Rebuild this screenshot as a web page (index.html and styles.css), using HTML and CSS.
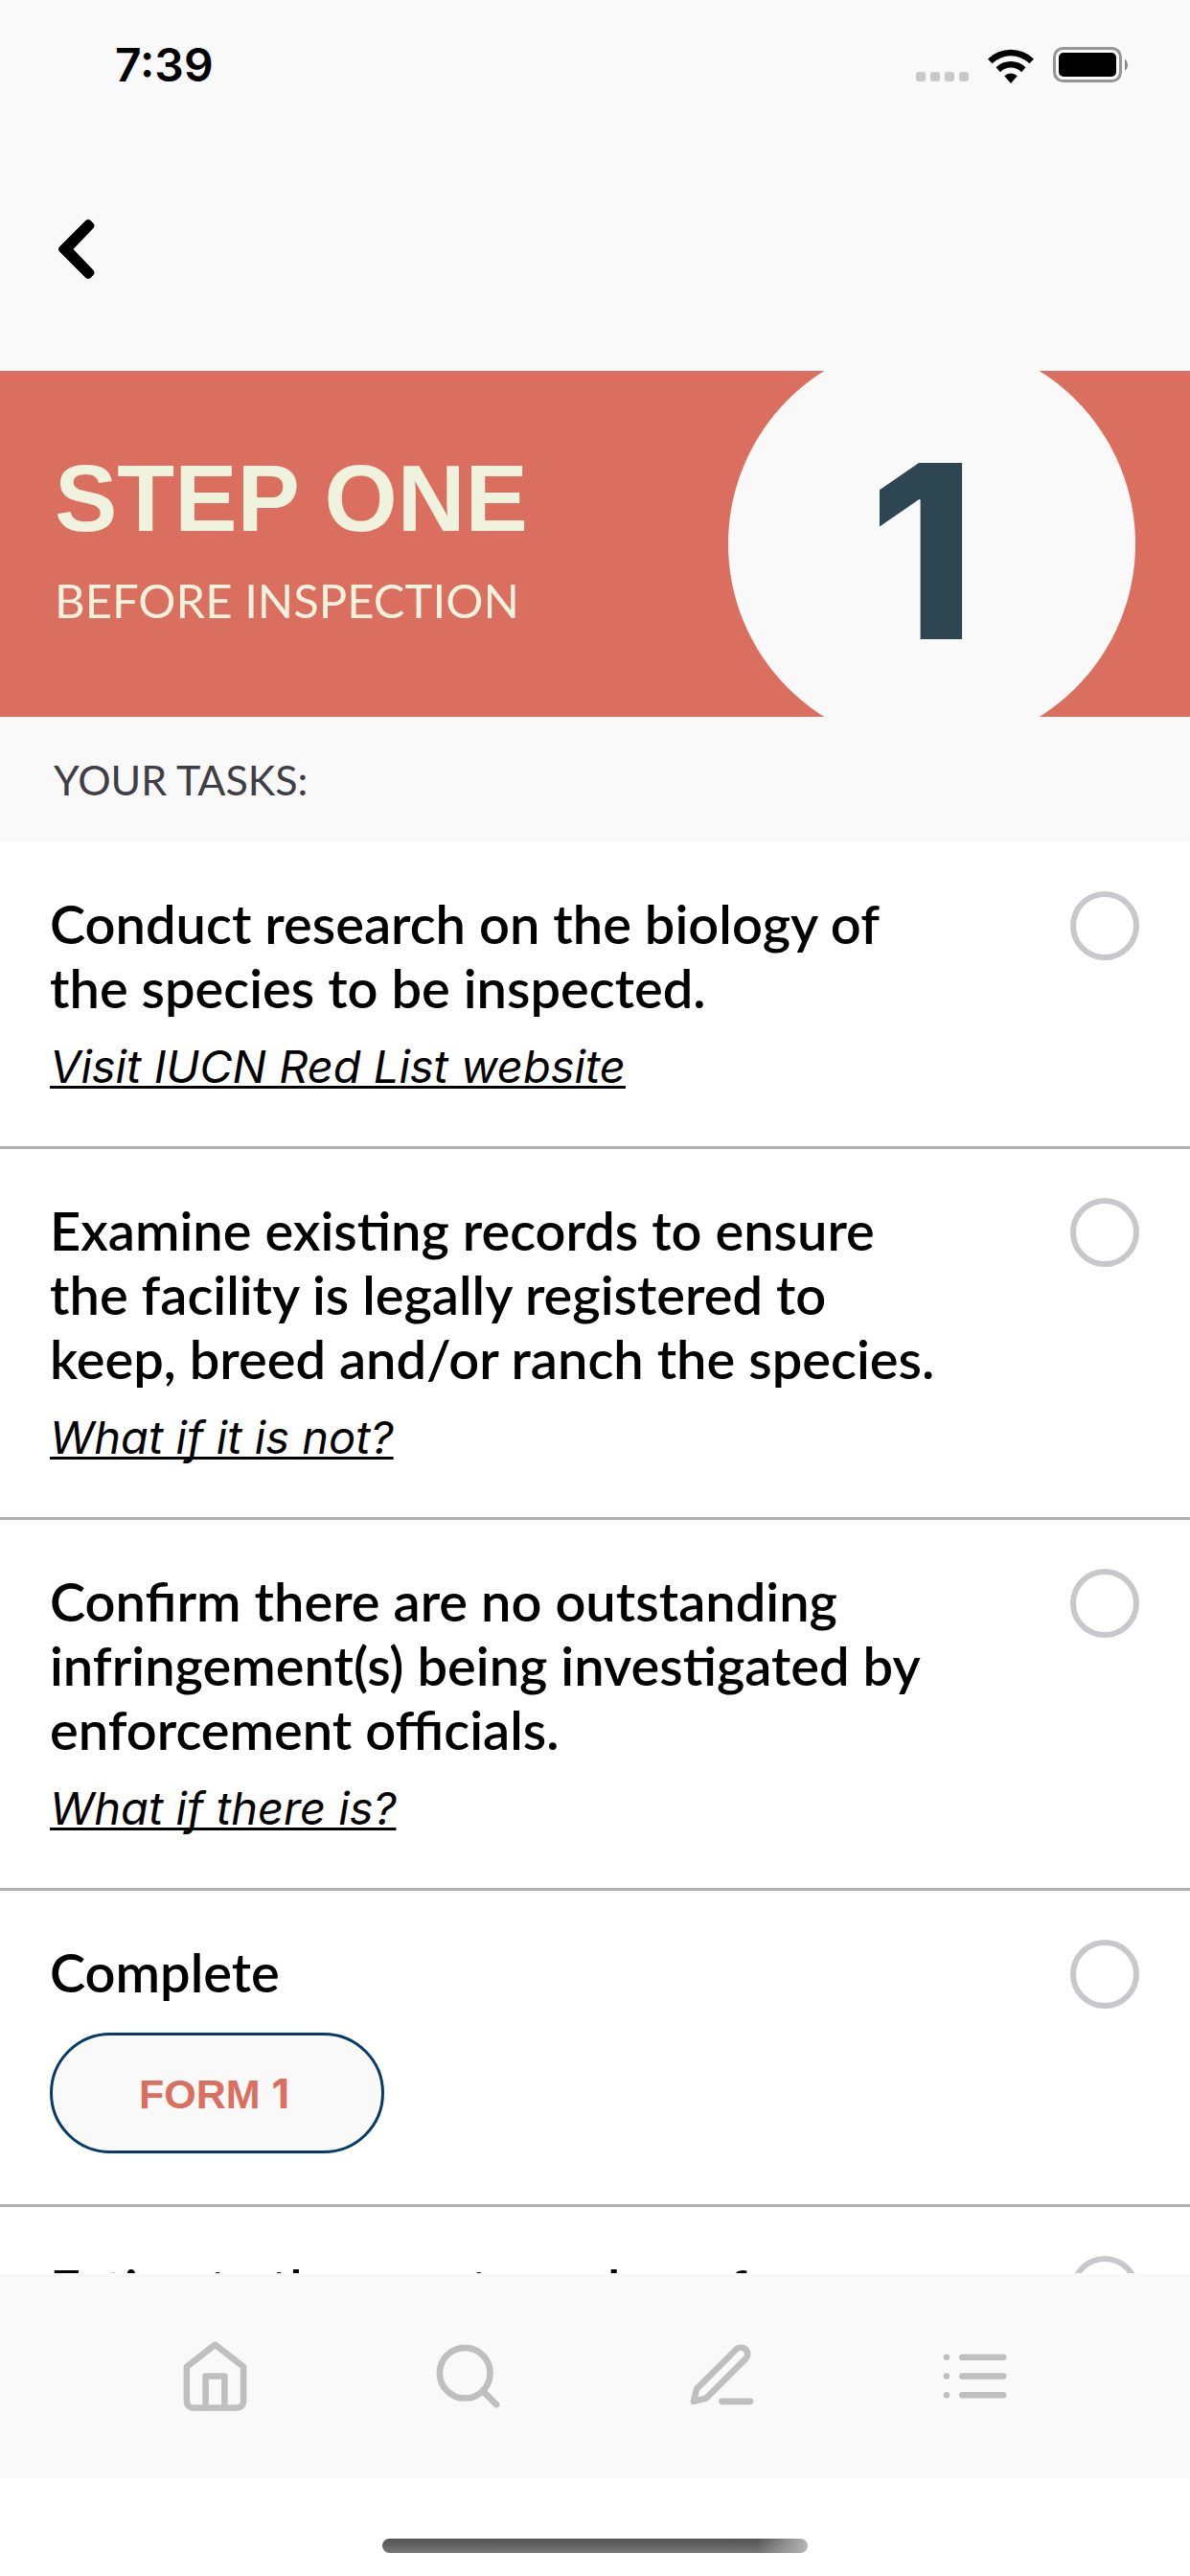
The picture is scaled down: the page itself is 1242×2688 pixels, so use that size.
FILE: index.html
```html
<!DOCTYPE html>
<html lang="en">
<head>
  <meta charset="UTF-8">
  <meta name="viewport" content="width=device-width, initial-scale=1">
  <title>Step One - Before Inspection</title>
  <link rel="stylesheet" href="styles.css">
</head>
<body>
  <div class="status-bar">
    <span class="time">7:39</span>
    <div class="status-icons">
      <div class="signal"><i></i><i></i><i></i><i></i></div>
      <svg class="wifi" viewBox="0 0 48 36">
        <path d="M0 10.500A34.500 34.500 0 0 1 48 10.500L43.500 15.200A28.200 28.200 0 0 0 4.500 15.200Z"/>
        <path d="M8.500 19.200A22.200 22.200 0 0 1 39.500 19.200L35 24.200A15.500 15.500 0 0 0 13 24.200Z"/>
        <path d="M17.200 28.300A9.800 9.800 0 0 1 30.800 28.300L24 36Z"/>
      </svg>
      <svg class="battery" viewBox="0 0 80 38">
        <rect x="1.500" y="1.500" width="69" height="34" rx="9" fill="none" stroke="#959595" stroke-width="3"/>
        <rect x="6" y="6" width="60" height="25" rx="5"/>
        <path d="M75 12.500a8 8 0 0 1 0 12.500z" fill="#858585"/>
      </svg>
    </div>
  </div>

  <header class="top-bar">
    <button class="back-btn" aria-label="Back">
      <svg viewBox="0 0 38 62">
        <path d="M28.500 1Q31 -1 33.500 1L36.500 4Q38.500 6.500 36.500 9L15.500 31L36.500 53Q38.500 55.500 36.500 58L33.500 61Q31 63 28.500 61L1 33.500Q-1 31 1 28.500Z"/>
      </svg>
    </button>
  </header>

  <section class="banner">
    <div class="banner-text">
      <h1>STEP ONE</h1>
      <p>BEFORE INSPECTION</p>
    </div>
    <div class="step-circle">1</div>
  </section>

  <h2 class="tasks-title">YOUR TASKS:</h2>

  <ul class="tasks">
    <li class="task">
      <div class="task-body">
        <label for="task1">Conduct research on the biology of the species to be inspected.</label>
        <a href="#iucn">Visit IUCN Red List website</a>
      </div>
      <input type="checkbox" id="task1">
    </li>
    <li class="task">
      <div class="task-body">
        <label for="task2">Examine existing records to ensure the facility is legally registered to keep, breed and/or ranch the species.</label>
        <a href="#not-registered">What if it is not?</a>
      </div>
      <input type="checkbox" id="task2">
    </li>
    <li class="task">
      <div class="task-body">
        <label for="task3">Confirm there are no outstanding infringement(s) being investigated by enforcement officials.</label>
        <a href="#infringements">What if there is?</a>
      </div>
      <input type="checkbox" id="task3">
    </li>
    <li class="task">
      <div class="task-body">
        <label for="task4">Complete</label>
        <button class="form-btn">FORM <span class="digit">1</span></button>
      </div>
      <input type="checkbox" id="task4">
    </li>
    <li class="task">
      <div class="task-body">
        <label for="task5">Estimate the exact number of</label>
      </div>
      <input type="checkbox" id="task5">
    </li>
  </ul>

  <nav class="tab-bar">
    <a href="#home" aria-label="Home">
      <svg viewBox="0 0 24 24"><path d="M3 9l9-7 9 7v11a2 2 0 0 1-2 2H5a2 2 0 0 1-2-2z"/><path d="M9 22V12h6v10"/></svg>
    </a>
    <a href="#search" aria-label="Search">
      <svg viewBox="0 0 24 24"><circle cx="11" cy="11" r="8"/><path d="M21 21l-4.350-4.350"/></svg>
    </a>
    <a href="#forms" aria-label="Forms">
      <svg viewBox="0 0 24 24"><path d="M12 20h9"/><path d="M16.500 3.500a2.121 2.121 0 0 1 3 3L7 19l-4 1 1-4L16.500 3.500z"/></svg>
    </a>
    <a href="#list" aria-label="List">
      <svg viewBox="0 0 24 24"><path d="M8 6h13M8 12h13M8 18h13M3 6h.01M3 12h.01M3 18h.01"/></svg>
    </a>
  </nav>
  <div class="home-area">
    <div class="home-indicator"></div>
  </div>
</body>
</html>
```

FILE: styles.css
```css
* {
  box-sizing: border-box;
}
body {
  margin: 0;
  height: 100vh;
  display: flex;
  flex-direction: column;
  background: #fff;
  color: #000;
  font-family: Lato, 'Open Sans', sans-serif;
}
h1, h2, p, ul {
  margin: 0;
  padding: 0;
}
button {
  cursor: pointer;
}

/* Status bar */
.status-bar {
  display: flex;
  justify-content: space-between;
  align-items: center;
  height: 135px;
  padding: 0 63px 0 120px;
  background: #f9f9f9;
}
.time {
  font-family: Inter, sans-serif;
  font-size: 48px;
  font-weight: 600;
}
.status-icons {
  display: flex;
  align-items: flex-end;
  gap: 20px;
}
.signal {
  display: flex;
  gap: 5px;
  padding-bottom: 2px;
}
.signal i {
  width: 10px;
  height: 10px;
  border-radius: 3px;
  background: #c8c8c8;
}
.wifi {
  width: 48px;
  height: 36px;
}
.battery {
  width: 80px;
  height: 38px;
}

/* Back button row */
.top-bar {
  display: flex;
  align-items: center;
  height: 252px;
  padding: 0 61px 2px;
  background: #f9f9f9;
}
.back-btn {
  padding: 0;
  border: none;
  background: none;
}
.back-btn svg {
  display: block;
  width: 38px;
  height: 62px;
}

/* Banner */
.banner {
  display: flex;
  justify-content: space-between;
  align-items: center;
  height: 361px;
  padding: 0 57px;
  background: #db6f5f;
  color: #eff2dd;
  overflow: hidden;
}
.banner-text {
  padding-bottom: 16px;
}
.banner h1 {
  font-family: 'Liberation Sans', Arial, sans-serif;
  font-size: 98px;
  line-height: 112px;
}
.banner p {
  margin-top: 20px;
  font-size: 49px;
  line-height: 60px;
}
.step-circle {
  flex: none;
  width: 425px;
  height: 425px;
  padding: 8px 20px 0 0;
  border-radius: 50%;
  background: #f9f9f9;
  color: #2e4652;
  font-family: Inter, sans-serif;
  font-size: 253px;
  font-weight: 800;
  line-height: 425px;
  text-align: center;
}
.tasks-title {
  padding: 0 56px;
  background: #f9f9f9;
  color: #3f3d45;
  font-size: 43px;
  font-weight: 400;
  line-height: 131px;
}

/* Task list */
.tasks {
  flex: 1;
  min-height: 0;
  margin-bottom: 1px;
  overflow: hidden;
  list-style: none;
}
.task {
  display: flex;
  justify-content: space-between;
  align-items: flex-start;
  gap: 132px;
  padding: 51px 53px 53px 52px;
  border-bottom: 3px solid #b0afb5;
}
.task-body {
  display: flex;
  flex-direction: column;
  align-items: flex-start;
  flex: 1;
  gap: 18px;
}
.task label {
  font-size: 56px;
  font-weight: 600;
  line-height: 67px;
}
.task a {
  color: #000;
  font-family: Inter, sans-serif;
  font-size: 47px;
  font-style: italic;
  line-height: 61px;
  text-decoration-thickness: 3px;
  text-underline-offset: 3px;
  text-decoration-skip-ink: none;
}
.task input {
  appearance: none;
  flex: none;
  width: 72px;
  height: 72px;
  margin: 0;
  border: 6px solid #c8c7cc;
  border-radius: 50%;
}
.task input:checked {
  background: #c8c7cc;
}
.form-btn {
  min-width: 349px;
  height: 126px;
  margin-top: 12px;
  padding: 0 6px 0 0;
  border: 3px solid #073b67;
  border-radius: 63px;
  background: #f9f9f9;
  color: #db6f5f;
  font-family: 'Liberation Sans', Arial, sans-serif;
  font-size: 43px;
  font-weight: 700;
}
.digit {
  font-family: Inter, sans-serif;
}

/* Bottom tabs */
.tab-bar {
  display: flex;
  align-items: center;
  height: 213px;
  padding: 0 92px;
  background: #f9f9f9;
}
.tab-bar a {
  flex: 1;
  display: flex;
  justify-content: center;
}
.tab-bar svg {
  width: 79px;
  height: 79px;
  fill: none;
  stroke: #bfbfbf;
  stroke-width: 2;
  stroke-linecap: round;
  stroke-linejoin: round;
}
.home-area {
  display: flex;
  justify-content: center;
  align-items: flex-end;
  height: 102px;
  padding-bottom: 24px;
}
.home-indicator {
  width: 444px;
  height: 15px;
  border-radius: 8px;
  background: linear-gradient(90deg, transparent 88%, #b5b5b5), linear-gradient(#525252, #767676);
}
```
